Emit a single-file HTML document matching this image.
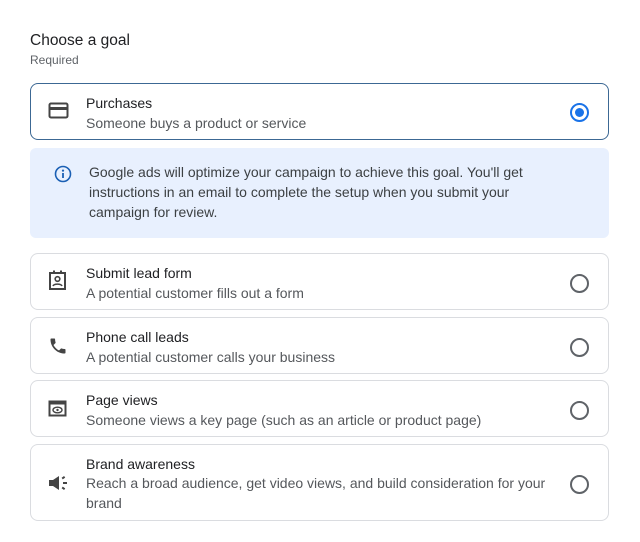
<!DOCTYPE html>
<html><head><meta charset="utf-8"><style>
body{margin:0;width:640px;height:542px;background:#fff;font-family:"Liberation Sans",Arial,sans-serif;color:#202124;position:relative;overflow:hidden}
.t{position:absolute;left:30px;top:32px;font-size:15.5px;color:#202124}
.r{position:absolute;left:30px;top:53px;font-size:12px;color:#5f6368}
.card{position:absolute;left:30px;width:579px;box-sizing:border-box;border:1px solid #dadce0;border-radius:8px}
.card.sel{border:1.5px solid #3c6894}
.ti{position:absolute;left:55px;font-size:14px;color:#202124}
.su{position:absolute;left:55px;font-size:14px;color:#55585c;line-height:20px}
.ic{position:absolute;left:17px}
.rad{position:absolute;right:19px;width:15px;height:15px;border:2px solid #5f6368;border-radius:50%}
.rad.on{border-color:#1a73e8}
.rad.on:after{content:"";position:absolute;left:3px;top:3px;width:9px;height:9px;border-radius:50%;background:#1a73e8}
.info{position:absolute;left:30px;top:148px;width:579px;height:90px;background:#e8f0fe;border-radius:6px}
.info p{position:absolute;left:59px;top:14px;margin:0;font-size:14px;line-height:20px;color:#3c4043;width:470px}
</style></head><body>
<div class="t">Choose a goal</div>
<div class="r">Required</div>

<div class="card sel" style="top:83px;height:57px">
<svg class="ic" style="top:18px" width="22" height="18" viewBox="0 0 22 18"><rect x="1.5" y="1.5" width="18" height="14" rx="1.5" fill="none" stroke="#444" stroke-width="2"/><rect x="1.5" y="5" width="18" height="3" fill="#444"/></svg>
<div class="ti" style="top:11px">Purchases</div>
<div class="su" style="top:29px">Someone buys a product or service</div>
<div class="rad on" style="top:19px"></div>
</div>

<div class="info">
<svg style="position:absolute;left:24px;top:17px" width="18" height="18" viewBox="0 0 18 18"><circle cx="9" cy="9" r="7.5" fill="none" stroke="#1a5fb4" stroke-width="1.6"/><rect x="8.1" y="8" width="1.8" height="5" fill="#1a5fb4"/><circle cx="9" cy="5.6" r="1.1" fill="#1a5fb4"/></svg>
<p>Google ads will optimize your campaign to achieve this goal. You'll get instructions in an email to complete the setup when you submit your campaign for review.</p>
</div>

<div class="card" style="top:253px;height:57px">
<svg class="ic" style="top:16px" width="20" height="22" viewBox="0 0 20 22"><rect x="2" y="3" width="15" height="16" fill="none" stroke="#444" stroke-width="2"/><rect x="5" y="0.5" width="2" height="3" fill="#444"/><rect x="12" y="0.5" width="2" height="3" fill="#444"/><circle cx="9.5" cy="9" r="2.3" fill="none" stroke="#444" stroke-width="1.6"/><path d="M5 16c1-2.5 8-2.5 9 0" fill="none" stroke="#444" stroke-width="1.6"/></svg>
<div class="ti" style="top:11px">Submit lead form</div>
<div class="su" style="top:29px">A potential customer fills out a form</div>
<div class="rad" style="top:20px"></div>
</div>

<div class="card" style="top:317px;height:57px">
<svg class="ic" style="top:18px" width="20" height="20" viewBox="0 0 24 24"><path fill="#444" d="M6.6 10.8c1.4 2.8 3.8 5.1 6.6 6.6l2.2-2.2c.3-.3.7-.4 1-.2 1.1.4 2.300.6 3.6.6.6 0 1 .4 1 1V20c0 .6-.4 1-1 1C10.6 21 3 13.4 3 4c0-.6.4-1 1-1h3.5c.6 0 1 .4 1 1 0 1.3.2 2.5.6 3.6.1.3 0 .7-.2 1L6.6 10.8z"/></svg>
<div class="ti" style="top:11px">Phone call leads</div>
<div class="su" style="top:29px">A potential customer calls your business</div>
<div class="rad" style="top:20px"></div>
</div>

<div class="card" style="top:380px;height:57px">
<svg class="ic" style="top:19px" width="20" height="18" viewBox="0 0 20 18"><rect x="1.5" y="1.5" width="16" height="14" fill="none" stroke="#444" stroke-width="2"/><rect x="1.5" y="1.5" width="16" height="3" fill="#444"/><ellipse cx="9.5" cy="10" rx="4.5" ry="2.8" fill="none" stroke="#444" stroke-width="1.4"/><circle cx="9.5" cy="10" r="1.2" fill="#444"/></svg>
<div class="ti" style="top:11px">Page views</div>
<div class="su" style="top:29px">Someone views a key page (such as an article or product page)</div>
<div class="rad" style="top:20px"></div>
</div>

<div class="card" style="top:444px;height:77px">
<svg class="ic" style="top:29px" width="22" height="18" viewBox="0 0 22 18"><path fill="#444" d="M1 6h4l6-4v14l-6-4H1z"/><rect x="15" y="8" width="4" height="2" fill="#444"/><rect x="14" y="3" width="3" height="2" fill="#444" transform="rotate(-35 15 4)"/><rect x="14" y="13" width="3" height="2" fill="#444" transform="rotate(35 15 14)"/></svg>
<div class="ti" style="top:11px">Brand awareness</div>
<div class="su" style="top:28px;width:480px">Reach a broad audience, get video views, and build consideration for your brand</div>
<div class="rad" style="top:30px"></div>
</div>
</body></html>
